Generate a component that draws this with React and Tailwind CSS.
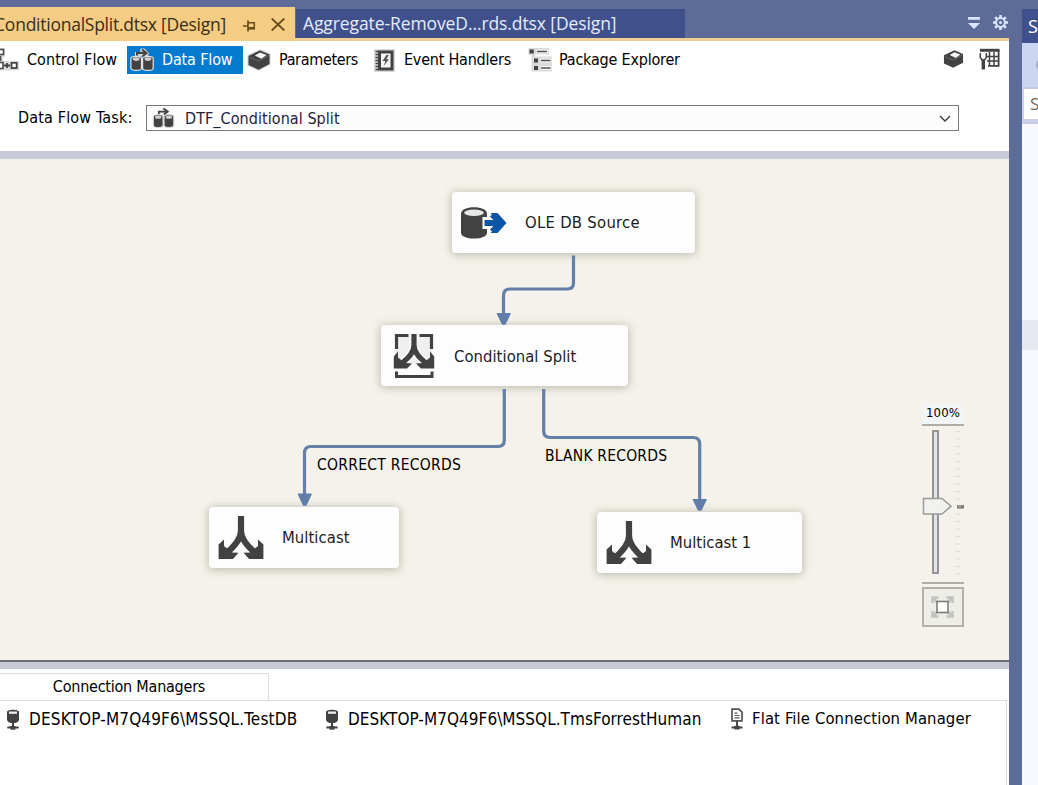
import React from 'react';

const DARK = '#424242';

function Cylinder({ x, y, w, h, halo }) {
  const r = w / 2;
  const k = w * 0.2;
  return (
    <g>
      <path
        d={`M${x} ${y + k}a${r} ${k} 0 0 1 ${w} 0v${h - 2 * k}a${r} ${k} 0 0 1 ${-w} 0z`}
        fill={DARK}
        stroke={halo}
        strokeWidth="1.2"
      />
      <ellipse cx={x + r} cy={y + k + 0.6} rx={r - 1.8} ry={k - 0.3} fill="#cfcfcf" />
    </g>
  );
}

function DataFlowIcon({ className, halo }) {
  const edge = halo ? '#e4e4e2' : '#d9d9d9';
  return (
    <svg className={className} viewBox="0 0 24 24">
      <path
        d="M5 8.500V4h5L10.500.500h4L19 5l-1.500 3.500z"
        fill={halo ? '#d3d5d6' : '#e9e9e9'}
      />
      <path d="M7 7.800V5h8" stroke={DARK} strokeWidth="1.900" fill="none" />
      <path d="M12 1.600L16.500 5 12.500 8.200" stroke={DARK} strokeWidth="2" fill="none" />
      <Cylinder x={0.900} y={8.400} w={10.600} h={14} halo={edge} />
      <Cylinder x={12.600} y={8.400} w={10.600} h={14} halo={edge} />
    </svg>
  );
}

function BoxIcon({ className, halo }) {
  return (
    <svg className={className} viewBox="0 0 24 22">
      {halo && <path d="M13 .2l10.500 4.300v11L12 21.800.500 16.800V6z" fill="#cfcfcf" />}
      <path d="M13 1.500l9.500 4v9.500l-11 5.700L1.500 16V7z" fill={DARK} />
      <path d="M7.800 6.500L13 3.500l6.500 2.500-5 3.800z" fill="#f5f5f5" />
      <path d="M2.500 8.500l9 3.500 10-5.300" stroke="#757575" strokeWidth=".7" fill="none" />
    </svg>
  );
}

function ControlFlowIcon() {
  return (
    <svg className="h-6 w-[19px] shrink-0" viewBox="0 0 19 24" fill="none">
      <path d="M-4 0h9v9H3v4h6v.500h10V22.500H-4z" fill="#dcdcdc" />
      <rect x="-3" y="1.500" width="6.500" height="5" fill="#fff" stroke="#4d4d4d" strokeWidth="1.600" />
      <path d="M.500 8v5" stroke="#4d4d4d" strokeWidth="1.600" />
      <rect x="-3" y="14.500" width="6" height="6" fill="#fff" stroke="#4d4d4d" strokeWidth="1.600" />
      <path d="M4 17.500h6M7 15v5" stroke={DARK} strokeWidth="1.800" />
      <rect x="11.500" y="14.800" width="5.200" height="5.200" fill="#fff" stroke={DARK} strokeWidth="1.800" />
    </svg>
  );
}

function EventIcon() {
  return (
    <svg className="h-[23px] w-[21px] shrink-0" viewBox="0 0 21 23" fill="none">
      <rect width="21" height="23" fill="#d8d8d8" />
      <rect x="5.500" y="3" width="12.500" height="17" fill="#f5f5f5" stroke={DARK} strokeWidth="3" />
      <path d="M1.500 2.500h3M1.500 5.500h3M1.500 8.500h3M1.500 11.500h3M1.500 14.500h3M1.500 17.500h3M1.500 20.500h3" stroke={DARK} strokeWidth="1.300" />
      <path d="M12.500 6l-4 6h3l-2 5 5.500-6.800h-2.800L14.800 6z" fill="#4d4d4d" />
    </svg>
  );
}

function ExplorerIcon() {
  return (
    <svg className="h-6 w-6 shrink-0" viewBox="0 0 24 24">
      <path d="M.500 0h20.500v6.500H7v2h17v15H3.500V7h-3z" fill="#dadada" />
      <path d="M1.500 1.500h4.200v4H1.500zM6 10.500h4v4H6zM6 18h4v4H6z" fill={DARK} />
      <path d="M8.500 1.500h11.500v4H8.500zM12.500 10.500h11v4h-11zM12.500 18h11v4h-11z" fill="#f4f4f4" />
      <path d="M9 3.500h10M13 12.500h9.500M13 20h9.500" stroke="#555" strokeWidth="1.600" />
    </svg>
  );
}

function GridToolIcon() {
  return (
    <svg className="h-[22px] w-[21px] shrink-0" viewBox="0 0 21 22" fill="none">
      <path d="M1 .800h19.500v3H1z" fill={DARK} />
      <path d="M19.600 2v15.800H9" stroke={DARK} strokeWidth="1.800" />
      <path d="M8 8.500h12M8 13h12M10.500 4v14M15 4v14" stroke={DARK} strokeWidth="1.500" />
      <path d="M0 5v5.500l2 2.500v8h4.500v-8L8 10.500V5z" fill="#fff" />
      <path d="M1.300 5V9.500l1.700 2.500h2.600l1.700-2.500V5" stroke={DARK} strokeWidth="1.500" />
      <path d="M4.300 11.500V21.500" stroke={DARK} strokeWidth="3.400" />
    </svg>
  );
}

function PinIcon() {
  return (
    <svg className="mt-[3px] h-3 w-[13px] shrink-0" viewBox="0 0 13 12" fill="none" stroke="#6b4e1c">
      <path d="M0 6h4.500M5 .5v11" strokeWidth="1.700" />
      <path d="M5 2.700h6.300v6.500" strokeWidth="1.500" />
      <path d="M5 8.300h7" strokeWidth="2.600" />
    </svg>
  );
}

function GearIcon() {
  const teeth = [0, 45, 90, 135, 180, 225, 270, 315];
  return (
    <svg className="h-[15px] w-[15px]" viewBox="0 0 15 15">
      {teeth.map((a) => (
        <rect key={a} x="6.200" y="0" width="2.600" height="3" fill="#dbe4ff" transform={`rotate(${a} 7.500 7.500)`} />
      ))}
      <circle cx="7.500" cy="7.500" r="4.400" fill="none" stroke="#dbe4ff" strokeWidth="2" />
      <circle cx="7.500" cy="7.500" r="1.500" fill="#dbe4ff" />
    </svg>
  );
}

function SourceIcon() {
  return (
    <svg className="h-[34px] w-[48px] shrink-0" viewBox="0 0 48 34">
      <path d="M1 7.500C1 3.500 7 1.200 14 1.200S27 3.500 27 7.500v19C27 30.500 21 32.500 14 32.500S1 30.500 1 26.500z" fill={DARK} />
      <ellipse cx="14" cy="6.800" rx="9.800" ry="3.200" fill="#e8e8e8" />
      <path d="M22.500 11h8V5h7l9 9v6l-9 8h-7v-5h-8z" fill="#fdfdfe" />
      <path d="M24.500 14H36.500L30.500 7h7L46.500 17 37.500 27h-7l6-7H24.500z" fill="#0b55a5" />
      <path d="M31 9.500l7.500 7.500-7.500 7.500" fill="none" stroke="#0b55a5" strokeWidth="3" />
    </svg>
  );
}

function ForkIcon() {
  return (
    <svg className="h-[46px] w-[46px] shrink-0" viewBox="0 0 46 46">
      <path d="M23 1v15C23 24 17 31 8 38.500M23 16c0 8 6 15 15 22.500" fill="none" stroke={DARK} strokeWidth="6.200" />
      <path d="M.600 29.500L6 24.500v6.500l8 6.500 6.500.300-5.500 6.200H.600zM45.400 29.500L40 24.500v6.500l-8 6.500-6.500.300 5.500 6.200h14.400z" fill={DARK} />
    </svg>
  );
}

function SplitIcon() {
  return (
    <svg className="h-[46px] w-[42px] shrink-0" viewBox="0 0 42 46" fill="none">
      <path d="M3 3h36v28H3z" fill="#efeff0" />
      <path d="M3.500 16V2.500h12M26.500 2.500h12V16" stroke={DARK} strokeWidth="3.200" />
      <path d="M21 1v11c0 8-6 13-13 19M21 12c0 8 6 13 13 19" stroke="#fafafa" strokeWidth="9" />
      <path d="M21 1v11c0 8-6 13-13 19M21 12c0 8 6 13 13 19" stroke={DARK} strokeWidth="5.200" />
      <path d="M.800 23.500L5 18.500v6l7 5.500 7 .500-5 5H.800zM41.200 23.500L37 18.500v6l-7 5.500-7 .500 5 5h13.200z" fill={DARK} />
      <path d="M3.500 38.500v5h35.500v-5" stroke={DARK} strokeWidth="3" />
    </svg>
  );
}

function ServerIcon() {
  return (
    <svg className="h-[21px] w-[14px] shrink-0" viewBox="0 0 14 21">
      <path d="M1 3C1 0 13 0 13 3v7.500c0 1.500-1.500 3-4 3.500H5c-2.500-.500-4-2-4-3.500z" fill={DARK} />
      <path d="M3 2.500h8v2.300H3z" fill="#ededed" />
      <path d="M7 13v5M1.300 18.600h11.400" stroke={DARK} strokeWidth="2" fill="none" />
      <path d="M4.500 17h5v3.700h-5z" fill={DARK} />
    </svg>
  );
}

function FileServerIcon() {
  return (
    <svg className="h-[22px] w-[14px] shrink-0" viewBox="0 0 14 22" fill="none">
      <path d="M2 1.200h7l3 3v8.600H2z" stroke="#555" strokeWidth="1.700" />
      <path d="M4.500 5.200h3M4.500 7.500h5M4.500 9.800h5" stroke="#555" strokeWidth="1.200" />
      <path d="M7 13v6M1.500 19.500h11" stroke="#444" strokeWidth="1.900" />
      <path d="M4.500 17.800h5v3.700h-5z" fill="#444" />
    </svg>
  );
}

function Node({ className, icon, label, labelClass }) {
  return (
    <div className={`absolute flex items-center rounded-[4px] bg-[#fdfdfe] shadow-[0_1px_8px_1px_rgba(120,115,95,0.42)] ${className}`}>
      {icon}
      <span className={`whitespace-nowrap text-[16.500px] text-[#1c1c1c] ${labelClass}`}>{label}</span>
    </div>
  );
}

function Connections() {
  return (
    <svg className="absolute left-0 top-0 h-[501px] w-[1009px]" viewBox="0 159 1009 501" fill="none">
      <g stroke="#667fa6" strokeWidth="3.200">
        <path d="M573.500 255.500V283q0 6-6 6H510q-6.500 0-6.500 6.500V316" />
        <path d="M504.300 389V440q0 6.500-6 6.500H311q-6.500 0-6.500 6.500V496" />
        <path d="M543.700 389V431q0 6.500 6.500 6.500H693q6.700 0 6.700 6.500V501" />
      </g>
      <g fill="#607daa" stroke="#607daa" strokeWidth="1.500" strokeLinejoin="round">
        <path d="M497.500 313.700h12.500l-5 10.300h-2.500z" />
        <path d="M298.500 494.200h12.500l-5 10.800h-2.500z" />
        <path d="M693.500 499.700h12.500l-5 10.300h-2.500z" />
      </g>
    </svg>
  );
}

function ZoomControl() {
  const ticks = Array.from({ length: 20 }, (_, i) => i).filter((i) => i !== 10);
  return (
    <div className="absolute left-[922px] top-[245px] flex w-[42px] flex-col items-center">
      <div className="h-5 w-[40px] bg-[#f3f4f6] text-center text-[13px] leading-[18px] tracking-[0.200px] text-black">100%</div>
      <svg className="h-[168px] w-[42px]" viewBox="0 0 42 168">
        <path d="M0 1h42M0 159h42" stroke="#adada8" strokeWidth="2" />
        <rect x="11" y="7" width="5" height="142" fill="#e2e4e6" stroke="#85878a" strokeWidth="1.700" />
        {ticks.map((i) => (
          <path key={i} d={`M33 ${7.500 + i * 7.500}h5`} stroke="#e2e0da" strokeWidth="1.300" />
        ))}
        <path d="M35 82.800h7" stroke="#77787a" strokeWidth="3.500" />
        <path d="M36 82.200h3" stroke="#c8c8c8" strokeWidth="1" />
        <path d="M1.500 74.500h18.500L29 82.300l-9 7.700H1.500z" fill="#f1f1f0" stroke="#9a9a98" strokeWidth="1.500" />
      </svg>
      <div className="-mt-[5px] flex h-10 w-[42px] items-center justify-center border-2 border-[#b1b1ad] bg-[#eeede8] pb-px pr-px">
        <svg className="h-[22px] w-[23px]" viewBox="0 0 23 22" fill="none">
          <path d="M1.500 7V1.500h6M15.500 1.500h6V7M21.500 15v5.500h-6M7.500 20.500h-6V15" stroke="#c2c2bf" strokeWidth="2.500" />
          <path d="M2 2l5 5M21 2l-5 5M21 20l-5-5M2 20l5-5" stroke="#c2c2bf" strokeWidth="3" />
          <rect x="6" y="5.500" width="11" height="11" fill="#fff" stroke="#7f7f78" strokeWidth="1.600" />
        </svg>
      </div>
    </div>
  );
}

function Canvas() {
  return (
    <div className="relative h-[501px] shrink-0 overflow-hidden bg-[#f4f2ea]">
      <Node className="left-[452px] top-[33px] h-[61px] w-[243px] pl-2" icon={<SourceIcon />} label="OLE DB Source" labelClass="ml-[17px] pt-px tracking-[0.280px]" />
      <Node className="left-[381px] top-[166px] h-[61px] w-[247px] pl-[12px]" icon={<SplitIcon />} label="Conditional Split" labelClass="ml-[19px] pt-[2px] tracking-[0.040px]" />
      <Node className="left-[209px] top-[348px] h-[61px] w-[190px] pl-[9px]" icon={<ForkIcon />} label="Multicast" labelClass="ml-[18px] pt-px tracking-[0.050px]" />
      <Node className="left-[597px] top-[353px] h-[61px] w-[205px] pl-[9px]" icon={<ForkIcon />} label="Multicast 1" labelClass="ml-[18px] pt-px tracking-[0px]" />
      <Connections />
      <span className="absolute left-[317px] top-[296px] whitespace-nowrap text-[15.500px] leading-5 tracking-[0.270px] text-black">CORRECT RECORDS</span>
      <span className="absolute left-[545px] top-[287px] whitespace-nowrap text-[15.500px] leading-5 tracking-[0.190px] text-black">BLANK RECORDS</span>
      <ZoomControl />
    </div>
  );
}

function TabStrip() {
  return (
    <div className="flex h-[41px] shrink-0 bg-[#5d6b99] font-['Open_Sans',sans-serif] text-[17.500px]">
      <div className="mt-[7px] flex h-[34px] w-[295px] shrink-0 items-center bg-[#f5cc84] text-[#3b2f14]">
        <div className="flex w-[226px] shrink-0 justify-end overflow-hidden whitespace-nowrap">
          <span className="tracking-[-0.250px]">ConditionalSplit.dtsx [Design]</span>
        </div>
        <div className="flex items-center gap-[15px] pl-[17px]">
          <PinIcon />
          <svg className="mt-px h-[13px] w-[14px]" viewBox="0 0 14 13">
            <path d="M.7.500l12.600 12M13.300.500L.7 12.500" stroke="#6b4e1c" strokeWidth="1.900" />
          </svg>
        </div>
      </div>
      <div className="flex h-full flex-1 flex-col justify-end">
        <div className="flex h-[29px] items-stretch justify-between">
          <div className="ml-px flex w-[389px] items-center bg-[#40508a] pl-[7px] text-[#e4ebff]">
            <span className="whitespace-nowrap pb-px tracking-[-0.100px]">Aggregate-RemoveD...rds.dtsx [Design]</span>
          </div>
          <div className="flex items-start gap-[13px] pr-px pt-[6px]">
            <svg className="mt-[2px] h-3 w-3" viewBox="0 0 12 12" fill="#dbe4ff">
              <path d="M0 0h12v2.800H0zM0 6h12l-6 6z" />
            </svg>
            <GearIcon />
          </div>
        </div>
        <div className="h-[3px] bg-[#f0cd92]" />
      </div>
    </div>
  );
}

function DesignerTabs() {
  return (
    <div className="flex h-[38px] items-center text-black">
      <div className="flex w-[127px] items-center gap-2">
        <ControlFlowIcon />
        <span className="whitespace-nowrap pb-px tracking-[0.060px]">Control Flow</span>
      </div>
      <div className="flex h-[28px] w-[116px] items-center gap-[8px] bg-[#057bcf] pl-[3px] text-white">
        <DataFlowIcon className="h-6 w-6 shrink-0" halo />
        <span className="whitespace-nowrap pb-px tracking-[-0.150px]">Data Flow</span>
      </div>
      <div className="flex w-[131px] items-center gap-2 pl-1">
        <BoxIcon className="h-[22px] w-6 shrink-0" halo />
        <span className="whitespace-nowrap pb-px tracking-[-0.330px]">Parameters</span>
      </div>
      <div className="flex w-[154px] items-center gap-[9px]">
        <EventIcon />
        <span className="whitespace-nowrap pb-px tracking-[-0.220px]">Event Handlers</span>
      </div>
      <div className="flex flex-1 items-center gap-[7px]">
        <ExplorerIcon />
        <span className="whitespace-nowrap pb-px tracking-[-0.200px]">Package Explorer</span>
      </div>
      <div className="flex items-center gap-[14px] pb-[3px] pr-[9px]">
        <BoxIcon className="h-[20px] w-[23px]" />
        <GridToolIcon />
      </div>
    </div>
  );
}

function ConnectionManagers() {
  return (
    <div className="flex flex-1 flex-col bg-white text-black">
      <div className="mt-[4px] flex h-[27px] w-[269px] shrink-0 items-center justify-center border border-l-0 border-b-0 border-[#dcdcde] pr-[10px]">
        <span className="whitespace-nowrap pb-px tracking-[-0.230px]">Connection Managers</span>
      </div>
      <div className="flex w-[1007px] flex-1 items-start border-r border-t border-[#dcdcde] pl-[6px] pt-[7px] text-[17px] leading-[22px]">
        <div className="flex w-[319px] gap-[9px]">
          <div className="pt-px"><ServerIcon /></div>
          <span className="whitespace-nowrap tracking-[0.160px]">DESKTOP-M7Q49F6\MSSQL.TestDB</span>
        </div>
        <div className="flex w-[405px] gap-[9px]">
          <div className="pt-px"><ServerIcon /></div>
          <span className="whitespace-nowrap tracking-[0.040px]">DESKTOP-M7Q49F6\MSSQL.TmsForrestHuman</span>
        </div>
        <div className="flex gap-[8px]">
          <FileServerIcon />
          <span className="whitespace-nowrap text-[16.500px] tracking-[0.120px]">Flat File Connection Manager</span>
        </div>
      </div>
    </div>
  );
}

function SidePanel() {
  return (
    <div className="flex w-4 shrink-0 flex-col overflow-hidden bg-[#f7f9fe] font-['Open_Sans',sans-serif]">
      <div className="h-[9px] shrink-0 bg-[#5d6b99]" />
      <div className="flex h-[34px] shrink-0 items-center bg-[#40508d] pl-[6px] text-[18px] text-white">S</div>
      <div className="flex h-[44px] shrink-0 items-center overflow-hidden bg-[#ccd5f0] pl-[14px]">
        <div className="h-3 w-3 shrink-0 rounded-full bg-[#a5adc4]" />
      </div>
      <div className="flex h-[37px] shrink-0 flex-col border-y-2 border-[#c5cbdc] bg-[#ccd3e6] pl-[2px]">
        <div className="flex h-[30px] items-center bg-white pl-[6px] text-[17px] text-[#75695c]">S</div>
      </div>
      <div className="mt-[196px] h-[30px] shrink-0 bg-[#e8e9ef]" />
    </div>
  );
}

export default function App() {
  return (
    <div className="flex h-[785px] w-[1038px] overflow-hidden bg-[#5d6b99] font-['DejaVu_Sans_Condensed','Noto_Sans',sans-serif] text-[16px] leading-6">
      <div className="flex w-[1009px] shrink-0 flex-col">
        <TabStrip />
        <div className="flex h-[110px] shrink-0 flex-col bg-white">
          <DesignerTabs />
          <div className="flex items-center pt-[26px]">
            <span className="w-[146px] shrink-0 whitespace-nowrap pl-[18px] tracking-[0.160px] text-black">Data Flow Task:</span>
            <div className="flex h-[26px] w-[813px] items-center border border-[#77787b] bg-[#fcfcfd] pl-[4px] text-[#1f2340]">
              <DataFlowIcon className="h-[22px] w-[25px] shrink-0" />
              <span className="ml-[9px] flex-1 whitespace-nowrap pt-px tracking-[0.060px]">DTF_Conditional Split</span>
              <svg className="mr-[7px] h-[7px] w-3" viewBox="0 0 12 7" fill="none">
                <path d="M1 1l5 5 5-5" stroke="#3c3c3c" strokeWidth="1.400" />
              </svg>
            </div>
          </div>
        </div>
        <div className="h-2 shrink-0 bg-[#c6cad9]" />
        <Canvas />
        <div className="h-[9px] shrink-0 border-t-2 border-[#6d6e74] bg-[#c8cbd7]" />
        <ConnectionManagers />
      </div>
      <div className="w-[13px] shrink-0 bg-[#5d6b99]" />
      <SidePanel />
    </div>
  );
}
